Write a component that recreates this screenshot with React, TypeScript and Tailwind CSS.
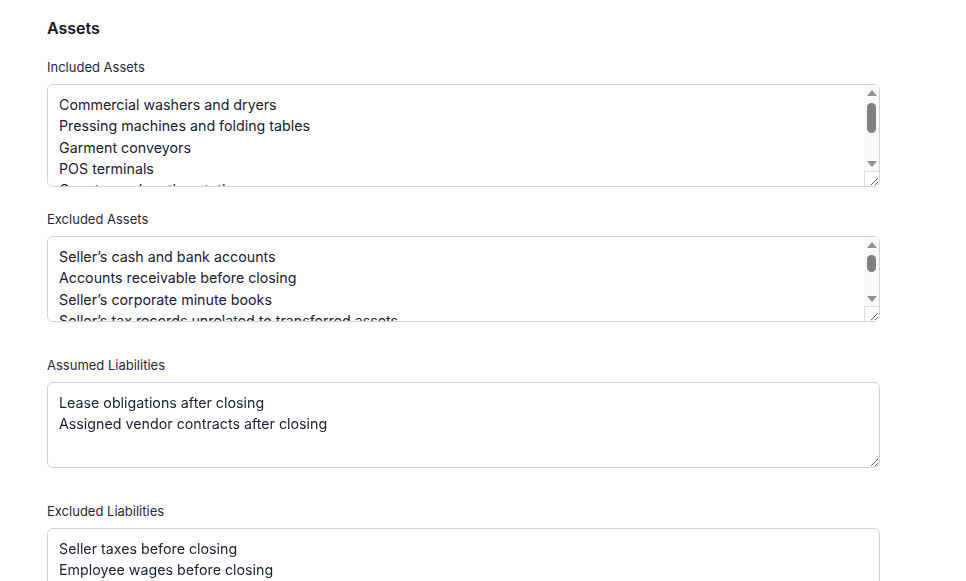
import React from "react";

type Field = {
  label: string;
  h: string;
  gap: string;
  value: string;
  thumb?: { top: string; h: string };
};

// Asset purchase agreement section: assets & liabilities text fields
const fields: Field[] = [
  {
    label: "Included Assets",
    h: "h-[103px]",
    gap: "mt-0",
    value:
      "Commercial washers and dryers\nPressing machines and folding tables\nGarment conveyors\nPOS terminals\nCounter and sorting stations\nCustomer lists and phone numbers",
    thumb: { top: "mt-[3px]", h: "h-[30px]" },
  },
  {
    label: "Excluded Assets",
    h: "h-[86px]",
    gap: "mt-[22px]",
    value:
      "Seller’s cash and bank accounts\nAccounts receivable before closing\nSeller’s corporate minute books\nSeller’s tax records unrelated to transferred assets",
    thumb: { top: "mt-[3px]", h: "h-[17px]" },
  },
  {
    label: "Assumed Liabilities",
    h: "h-[86px]",
    gap: "mt-[33px]",
    value: "Lease obligations after closing\nAssigned vendor contracts after closing",
  },
  {
    label: "Excluded Liabilities",
    h: "h-[86px]",
    gap: "mt-[33px]",
    value: "Seller taxes before closing\nEmployee wages before closing",
  },
];

function Arrow({ up }: { up?: boolean }) {
  return (
    <div className="h-[15px] w-full flex items-center justify-center">
      <svg width="10" height="6" viewBox="0 0 10 6">
        {up ? <polygon points="5,0 10,6 0,6" fill="#939393" /> : <polygon points="0,0 10,0 5,6" fill="#939393" />}
      </svg>
    </div>
  );
}

// drawn stand-in for the classic textarea scrollbar
function Scrollbar({ thumb }: { thumb: { top: string; h: string } }) {
  return (
    <>
      <div className="pointer-events-none absolute right-[1px] top-[1px] bottom-[16px] w-[15px] rounded-tr-md bg-[#f9f9f9] flex flex-col">
        <Arrow up />
        <div className="flex-1 flex flex-col items-center">
          <div className={`${thumb.top} ${thumb.h} w-[9px] rounded-full bg-[#808080]`} />
        </div>
        <Arrow />
      </div>
      <div className="pointer-events-none absolute right-[1px] bottom-[1px] w-[15px] h-[15px] border-l border-t border-[#dcdcdc]" />
    </>
  );
}

export default function App() {
  return (
    <div
      className="min-h-screen bg-white pl-[47px] pt-[16px]"
      style={{ fontFamily: "Inter, 'Noto Sans', sans-serif" }}
    >
      <h2 className="text-[16px] leading-[24px] font-semibold text-[#111827] mb-[17px]">Assets</h2>
      {fields.map((f) => (
        <div key={f.label} className={f.gap}>
          <label className="block text-[13px] leading-[20px] text-[#1f2937] mb-[7px]">{f.label}</label>
          <div className="relative w-[833px]">
            <textarea
              readOnly
              defaultValue={f.value}
              className={`block w-full ${f.h} rounded-md border border-[#cbd5e1] bg-white px-[11px] pt-[9px] pb-[7px] text-[14.25px] leading-[21.33px] text-[#1a2030] outline-none`}
            />
            {f.thumb && <Scrollbar thumb={f.thumb} />}
          </div>
        </div>
      ))}
    </div>
  );
}
